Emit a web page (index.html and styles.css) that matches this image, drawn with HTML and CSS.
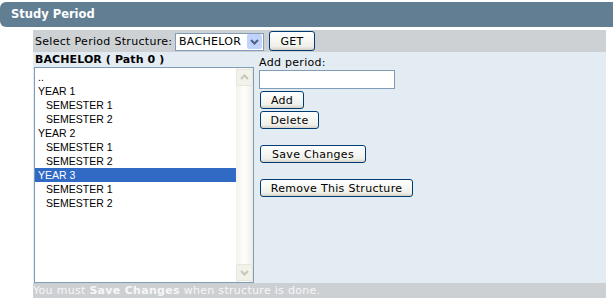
FILE: index.html
```html
<!DOCTYPE html>
<html>
<head>
<meta charset="utf-8">
<link rel="stylesheet" href="styles.css">
</head>
<body>
<div class="header">Study Period</div>
<div class="panel">
  <div class="toolbar">
    <span class="label">Select Period Structure:</span>
    <div class="select"><span class="select-text">BACHELOR</span><span class="select-btn"><svg width="15" height="15" viewBox="0 0 15 15"><path d="M4 6 L7.5 9.5 L11 6" fill="none" stroke="#4d6185" stroke-width="2"/></svg></span></div>
    <button class="btn get">GET</button>
  </div>
  <div class="content">
    <div class="left">
      <div class="path">BACHELOR ( Path 0 )</div>
      <div class="listbox">
        <div class="items">
          <div class="item">..</div>
          <div class="item">YEAR 1</div>
          <div class="item sub">SEMESTER 1</div>
          <div class="item sub">SEMESTER 2</div>
          <div class="item">YEAR 2</div>
          <div class="item sub">SEMESTER 1</div>
          <div class="item sub">SEMESTER 2</div>
          <div class="item selected">YEAR 3</div>
          <div class="item sub">SEMESTER 1</div>
          <div class="item sub">SEMESTER 2</div>
        </div>
        <div class="scrollbar">
          <div class="sb-btn"><svg width="15" height="15" viewBox="0 0 15 15"><path d="M4 9 L7.5 5.5 L11 9" fill="none" stroke="#c9c7ba" stroke-width="2"/></svg></div>
          <div class="sb-btn"><svg width="15" height="15" viewBox="0 0 15 15"><path d="M4 6 L7.5 9.5 L11 6" fill="none" stroke="#c9c7ba" stroke-width="2"/></svg></div>
        </div>
      </div>
    </div>
    <div class="right">
      <div class="addlabel">Add period:</div>
      <div class="input"></div>
      <button class="btn add">Add</button>
      <button class="btn del">Delete</button>
      <button class="btn save">Save Changes</button>
      <button class="btn remove">Remove This Structure</button>
    </div>
  </div>
  <div class="footer">You must <b>Save Changes</b> when structure is done.</div>
</div>
</body>
</html>
```
FILE: styles.css
```css
html, body { margin: 0; padding: 0; background: #fff; }
body { font-family: "DejaVu Sans", Verdana, sans-serif; font-size: 11px; color: #000; letter-spacing: 0.3px; }
.header {
  margin-top: 2px;
  height: 25px;
  line-height: 25px;
  background: #617e93;
  color: #fff;
  font-weight: bold;
  font-size: 11.5px;
  letter-spacing: 0;
  padding-left: 11px;
  border-radius: 6px 0 0 6px;
}
.panel { margin: 3px 0 0 33px; width: 573px; }
.toolbar {
  height: 22px;
  background: #cdd1d4;
  display: flex;
  align-items: center;
}
.label { margin-left: 2px; width: 140px; white-space: nowrap; }
.select {
  width: 87px; height: 16px;
  border: 1px solid #7f9db9;
  background: #fff;
  display: flex; align-items: center;
  margin-top: 1px;
}
.select-text { flex: 1; padding-left: 3px; }
.select-btn {
  width: 15px; height: 15px; margin-right: 1px;
  background: #c1d3fb;
  border-radius: 2px;
  display: flex;
}
.btn {
  font-family: "DejaVu Sans", Verdana, sans-serif;
  font-size: 11px;
  letter-spacing: 0.3px;
  white-space: nowrap;
  color: #000;
  border: 1px solid #003c74;
  border-radius: 3px;
  background: linear-gradient(#ffffff, #f0f0ea 80%, #d6d0c5);
  padding: 0;
  height: 18px;
  display: block;
}
.get { width: 46px; height: 20px; margin-left: 5px; }
.content {
  background: #e4ecf3;
  height: 231px;
  display: flex;
}
.left { margin-left: 1px; width: 220px; }
.path { font-weight: bold; height: 15px; line-height: 16px; padding-left: 1px; letter-spacing: 0.1px; }
.listbox {
  height: 214px;
  border: 1px solid #7f9db9;
  background: #fff;
  display: flex;
}
.items {
  flex: 1;
  padding-top: 2px;
  font-family: "Liberation Sans", Arial, sans-serif;
  font-size: 10.5px;
  letter-spacing: 0;
}
.item { height: 14px; line-height: 14px; padding-left: 3px; }
.item.sub { padding-left: 11px; }
.item.selected { background: #316ac5; color: #fff; }
.scrollbar {
  width: 17px;
  background: linear-gradient(90deg, #f3f1ec, #fefefb 50%, #eeede5);
  display: flex; flex-direction: column; justify-content: space-between;
  padding: 1px 0;
}
.sb-btn {
  width: 15px; height: 15px;
  border: 1px solid #e8e6dc;
  border-radius: 2px;
  background: #f2f1ea;
  display: flex;
}
.right { margin-left: 5px; display: flex; flex-direction: column; align-items: flex-start; }
.addlabel { height: 18px; line-height: 22px; }
.input {
  width: 134px; height: 17px;
  border: 1px solid #7f9db9;
  background: #fff;
}
.add { width: 44px; margin-top: 2px; margin-left: 1px; }
.del { width: 59px; margin-top: 2px; margin-left: 1px; }
.save { width: 106px; margin-top: 16px; margin-left: 1px; }
.remove { width: 153px; margin-top: 16px; margin-left: 1px; }
.footer {
  height: 15px;
  line-height: 16px;
  background: #cdd0d3;
  color: #f7f7f7;
}
.footer b { font-weight: bold; }
```
